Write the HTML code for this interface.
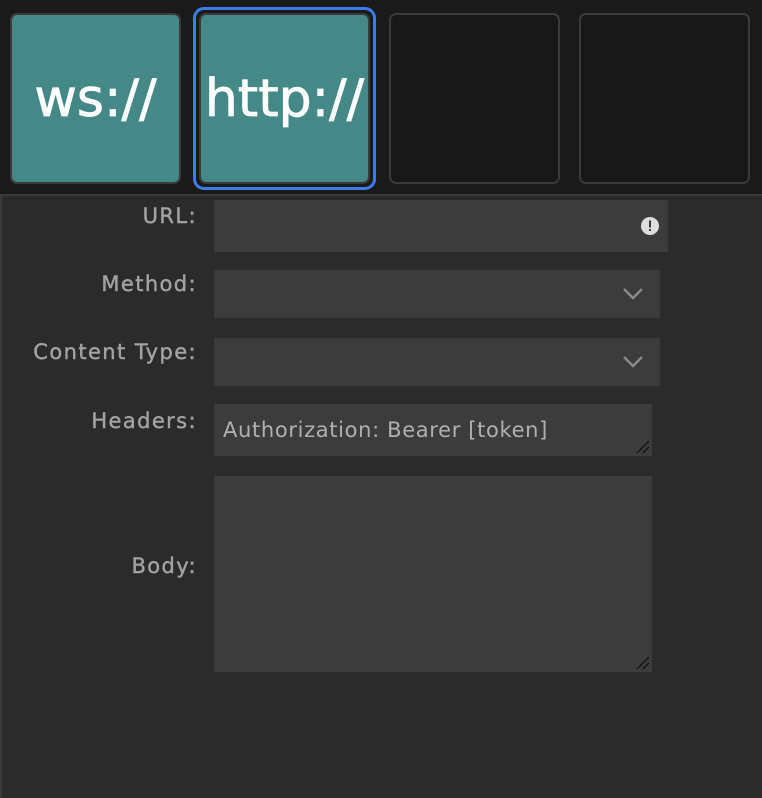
<!DOCTYPE html>
<html><head><style>
*{margin:0;padding:0;box-sizing:border-box}
body{width:762px;height:798px;background:#2b2b2b;font-family:"DejaVu Sans",sans-serif;position:relative;overflow:hidden}
.top{position:absolute;left:0;top:0;width:762px;height:196px;background:#1a1a1a;border-bottom:2px solid #3a3a3a}
.tile{position:absolute;top:13px;width:171px;height:171px;border:2px solid #3a3a3a;border-radius:7px;background:#181818;color:#fff;font-family:"DejaVu Sans",sans-serif;font-size:52px;-webkit-text-stroke:0.8px #fff;display:flex;align-items:center;justify-content:center}
.teal{background:#448888}
.sel{position:absolute;left:193px;top:7px;width:183px;height:183px;border:3px solid #3b7de8;border-radius:11px}
.leftline{position:absolute;left:0;top:196px;width:2px;height:602px;background:#3a3a3a}
.lbl{position:absolute;right:565px;color:#a3a3a3;font-size:21px;letter-spacing:1.4px;-webkit-text-stroke:0.4px #a3a3a3;text-align:right;white-space:nowrap}
.f{position:absolute;left:214px;background:#3c3c3c}
.chev{position:absolute;right:17px;top:50%;margin-top:-6px}
.txt{color:#b0b0b0;font-size:21px;letter-spacing:0.65px;padding:14px 9px;white-space:nowrap}
.rs{position:absolute;right:2px;bottom:2px}
</style></head><body>
<div class="top">
<div class="tile teal" style="left:10px">ws://</div>
<div class="sel"></div>
<div class="tile teal" style="left:199px">http://</div>
<div class="tile" style="left:389px"></div>
<div class="tile" style="left:579px"></div>
</div>
<div class="leftline"></div>
<div class="lbl" style="top:204px">URL:</div>
<div class="f" style="top:200px;width:454px;height:52px">
<svg style="position:absolute;right:9px;top:17px" width="18" height="18"><circle cx="9" cy="9" r="9" fill="#ddd"/><rect x="8" y="3.5" width="2" height="7" fill="#3c3c3c"/><rect x="8" y="12" width="2" height="2" fill="#3c3c3c"/></svg>
</div>
<div class="lbl" style="top:272px">Method:</div>
<div class="f" style="top:270px;width:446px;height:48px"><svg class="chev" width="20" height="12"><path d="M1 1 L10 10 L19 1" stroke="#8a8a8a" stroke-width="2.4" fill="none"/></svg></div>
<div class="lbl" style="top:340px">Content Type:</div>
<div class="f" style="top:338px;width:446px;height:48px"><svg class="chev" width="20" height="12"><path d="M1 1 L10 10 L19 1" stroke="#8a8a8a" stroke-width="2.4" fill="none"/></svg></div>
<div class="lbl" style="top:409px">Headers:</div>
<div class="f txt" style="top:404px;width:438px;height:52px">Authorization: Bearer [token]<svg class="rs" width="14" height="14"><path d="M1 13 L13 1 M7 13 L13 7" stroke="#151515" stroke-width="1.5"/></svg></div>
<div class="lbl" style="top:554px">Body:</div>
<div class="f" style="top:476px;width:438px;height:196px"><svg class="rs" width="14" height="14"><path d="M1 13 L13 1 M7 13 L13 7" stroke="#151515" stroke-width="1.5"/></svg></div>
</body></html>
